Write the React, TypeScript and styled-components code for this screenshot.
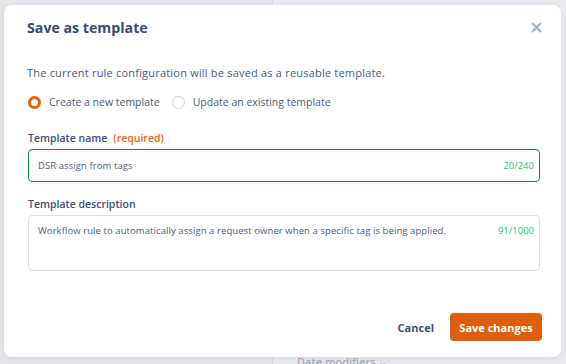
import React from 'react'
import styled, { createGlobalStyle } from 'styled-components'

const GlobalStyle = createGlobalStyle`
  html, body {
    margin: 0;
    padding: 0;
    background: #e5e7ec;
  }
  * { box-sizing: border-box; }
  body {
    font-family: 'Open Sans', 'Liberation Sans', Arial, sans-serif;
    -webkit-font-smoothing: antialiased;
  }
`

const Page = styled.div`
  position: relative;
  width: 566px;
  height: 364px;
  overflow: hidden;
  background: #e5e7ec;
`

// faint page content behind the overlay
const Behind = styled.div`
  position: absolute;
  left: 272px;
  top: 0;
  right: 0;
  bottom: 0;
  border-left: 1px solid #d9dce3;
  background: #e9ebf0;
`

const BehindLabel = styled.div`
  position: absolute;
  left: 24px;
  bottom: -5px;
  font-size: 11px;
  font-weight: 600;
  color: #a7adbb;
`

const Modal = styled.div`
  position: absolute;
  left: 4px;
  top: 5px;
  width: 557px;
  height: 352px;
  background: #fff;
  border-radius: 8px;
  box-shadow: 0 2px 8px rgba(40, 50, 80, 0.08);
  display: flex;
  flex-direction: column;
`

const Header = styled.div`
  display: flex;
  align-items: center;
  justify-content: space-between;
  padding: 0 18px 0 23px;
  height: 44px;
`

const Title = styled.h2`
  margin: 0;
  font-size: 14.2px;
  font-weight: 700;
  color: #3a4c6b;
`

const Close = styled.button`
  border: 0;
  background: none;
  padding: 0;
  width: 14px;
  height: 14px;
  display: flex;
  align-items: center;
  justify-content: center;
  cursor: pointer;
`

const Body = styled.div`
  flex: 1;
  padding: 16px 20px 0 23px;
  display: flex;
  flex-direction: column;
`

const Intro = styled.p`
  margin: 0;
  font-size: 11px;
  letter-spacing: 0.2px;
  color: #4b5b78;
  line-height: 16px;
`

const RadioRow = styled.div`
  display: flex;
  align-items: center;
  gap: 12px;
  margin-top: 14px;
  padding-left: 1px;
`

const RadioOption = styled.label`
  display: flex;
  align-items: center;
  gap: 8px;
  font-size: 10.5px;
  color: #4b5b78;
`

const RadioDot = styled.span<{ $checked?: boolean }>`
  width: 13px;
  height: 13px;
  border-radius: 50%;
  background: #fff;
  border: ${(p) => (p.$checked ? '3.5px solid #e0630f' : '1px solid #cdd3e0')};
`

const Field = styled.div<{ $gap: number }>`
  display: flex;
  flex-direction: column;
  margin-top: ${(p) => p.$gap}px;
`

const Label = styled.div`
  font-size: 10.5px;
  font-weight: 600;
  color: #3e5070;
  line-height: 14px;
  margin-bottom: 4px;
  padding-left: 1px;
`

const Required = styled.span`
  color: #e06a1a;
  margin-left: 6px;
`

const InputBox = styled.div<{ $focused?: boolean; $tall?: boolean }>`
  width: 512px;
  margin-left: 1px;
  height: ${(p) => (p.$tall ? '56px' : '33px')};
  border: 1px solid ${(p) => (p.$focused ? '#23804f' : '#dcdfea')};
  border-radius: 4px;
  display: flex;
  align-items: ${(p) => (p.$tall ? 'flex-start' : 'center')};
  justify-content: space-between;
  padding: ${(p) => (p.$tall ? '8px 5px 0 9px' : '0 5px 0 9px')};
  font-size: 9.5px;
`

const Value = styled.span`
  color: #4e5d77;
  letter-spacing: 0.08px;
`

const Counter = styled.span`
  color: #2fbf7f;
  font-size: 9.5px;
`

const Footer = styled.div`
  display: flex;
  justify-content: flex-end;
  align-items: center;
  gap: 16px;
  padding: 0 19px 16px 0;
`

const TextButton = styled.button`
  border: 0;
  background: none;
  padding: 0;
  font-family: inherit;
  font-size: 11px;
  font-weight: 700;
  color: #3e5070;
  cursor: pointer;
`

const PrimaryButton = styled.button`
  border: 0;
  border-radius: 4px;
  background: #dd5f0b;
  color: #fff;
  font-family: inherit;
  font-size: 11px;
  font-weight: 700;
  height: 28px;
  width: 92px;
  cursor: pointer;
`

const App: React.FC = () => (
  <>
    <GlobalStyle />
    <Page>
      <Behind>
        <BehindLabel>Date modifiers ⌄</BehindLabel>
      </Behind>
      <Modal>
        <Header>
          <Title>Save as template</Title>
          <Close aria-label="Close">
            <svg width="11" height="11" viewBox="0 0 11 11">
              <path d="M1.5 1.5 L9.5 9.5 M9.5 1.5 L1.5 9.5" stroke="#9fb1c7" strokeWidth="2" strokeLinecap="round" />
            </svg>
          </Close>
        </Header>
        <Body>
          <Intro>The current rule configuration will be saved as a reusable template.</Intro>
          <RadioRow>
            <RadioOption>
              <RadioDot $checked />
              Create a new template
            </RadioOption>
            <RadioOption>
              <RadioDot />
              Update an existing template
            </RadioOption>
          </RadioRow>
          <Field $gap={22}>
            <Label>
              Template name<Required>(required)</Required>
            </Label>
            <InputBox $focused>
              <Value>DSR assign from tags</Value>
              <Counter>20/240</Counter>
            </InputBox>
          </Field>
          <Field $gap={15}>
            <Label>Template description</Label>
            <InputBox $tall>
              <Value>Workflow rule to automatically assign a request owner when a specific tag is being applied.</Value>
              <Counter>91/1000</Counter>
            </InputBox>
          </Field>
        </Body>
        <Footer>
          <TextButton>Cancel</TextButton>
          <PrimaryButton>Save changes</PrimaryButton>
        </Footer>
      </Modal>
    </Page>
  </>
)

export default App
